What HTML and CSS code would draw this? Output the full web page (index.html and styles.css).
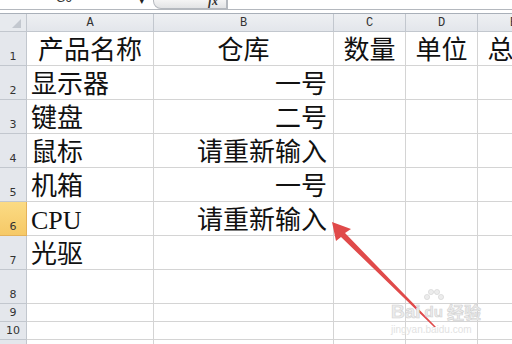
FILE: index.html
```html
<!DOCTYPE html>
<html lang="zh-CN">
<head>
<meta charset="utf-8">
<title>Sheet</title>
<link rel="stylesheet" href="styles.css">
</head>
<body>
<div class="fbar">
  <div class="namebox"><span class="ref">G6</span><span class="dd">&#9662;</span></div>
  <div class="fxbox"><span class="fx">fx</span></div>
  <div class="finput"></div>
</div>
<div class="sheet">
  <div class="corner"><span class="tri"></span></div>
  <div class="ch">A</div><div class="ch">B</div><div class="ch">C</div><div class="ch">D</div><div class="ch">E</div>

  <div class="rh">1</div><div class="c center">产品名称</div><div class="c center">仓库</div><div class="c center">数量</div><div class="c center">单位</div><div class="c center">总价</div>
  <div class="rh">2</div><div class="c">显示器</div><div class="c right">一号</div><div class="c"></div><div class="c"></div><div class="c"></div>
  <div class="rh">3</div><div class="c">键盘</div><div class="c right">二号</div><div class="c"></div><div class="c"></div><div class="c"></div>
  <div class="rh">4</div><div class="c">鼠标</div><div class="c right">请重新输入</div><div class="c"></div><div class="c"></div><div class="c"></div>
  <div class="rh">5</div><div class="c">机箱</div><div class="c right">一号</div><div class="c"></div><div class="c"></div><div class="c"></div>
  <div class="rh sel">6</div><div class="c">CPU</div><div class="c right">请重新输入</div><div class="c"></div><div class="c"></div><div class="c"></div>
  <div class="rh">7</div><div class="c">光驱</div><div class="c"></div><div class="c"></div><div class="c"></div><div class="c"></div>
  <div class="rh">8</div><div class="c"></div><div class="c"></div><div class="c"></div><div class="c"></div><div class="c"></div>
  <div class="rh">9</div><div class="c"></div><div class="c"></div><div class="c"></div><div class="c"></div><div class="c"></div>
  <div class="rh">10</div><div class="c"></div><div class="c"></div><div class="c"></div><div class="c"></div><div class="c"></div>
  <div class="rh">11</div><div class="c"></div><div class="c"></div><div class="c"></div><div class="c"></div><div class="c"></div>
</div>

<svg class="arrow" width="512" height="344" viewBox="0 0 512 344">
  <path d="M332 222 L351 229 L345 233 L436 327 L434 327 L341 237 L336 241 Z" fill="#e04a4a"/>
</svg>

<div class="wm">
  <div class="wm-logo"><span class="wm-bai">Bai</span><span class="wm-du"><svg class="paw" width="26" height="14" viewBox="0 0 26 14"><circle cx="6" cy="9" r="2.6"/><circle cx="10" cy="4" r="2.6"/><circle cx="16" cy="4" r="2.6"/><circle cx="20" cy="9" r="2.6"/></svg>du</span><span class="wm-jy">经验</span></div>
  <div class="wm-url">jingyan.baidu.com</div>
</div>
</body>
</html>
```

FILE: styles.css
```css
html, body {
  margin: 0;
  padding: 0;
  background: #ffffff;
  width: 512px;
  height: 344px;
  overflow: hidden;
  position: relative;
}

.fbar {
  display: flex;
  height: 9px;
  border-bottom: 1px solid #b4b8be;
  margin-bottom: 3px;
  overflow: hidden;
}

.namebox {
  width: 153px;
  position: relative;
  font-family: "Liberation Sans", sans-serif;
  font-size: 12px;
  color: #333;
}

.ref {
  position: absolute;
  left: 56px;
  top: -9px;
}

.dd {
  position: absolute;
  left: 139px;
  top: -6px;
  font-size: 11px;
  color: #222;
}

.fxbox {
  width: 74px;
  box-sizing: border-box;
  background: linear-gradient(#f4f4f4, #e2e3e5);
  border: 1px solid #b4b8be;
  border-top: none;
  border-radius: 0 0 0 8px;
  position: relative;
}

.fx {
  position: absolute;
  right: 8px;
  top: -6px;
  font-family: "Liberation Serif", serif;
  font-style: italic;
  font-weight: bold;
  font-size: 12px;
  color: #333;
}

.finput {
  flex: 1;
  border-left: 1px solid #b4b8be;
}

.sheet {
  display: grid;
  width: 600px;
  grid-template-columns: 27px 127px 180px 72px 72px 72px;
  grid-template-rows: 18px repeat(8, 34px) 18px 18px 18px;
  border-top: 1px solid #a9b0b9;
}

.corner {
  background: #e7eaee;
  border-right: 1px solid #c2c7ce;
  border-bottom: 1px solid #c2c7ce;
  position: relative;
}

.tri {
  position: absolute;
  right: 5px;
  bottom: 3px;
  width: 0;
  height: 0;
  border-left: 9px solid transparent;
  border-bottom: 9px solid #c3c8cf;
}

.ch {
  background: linear-gradient(#eef0f3, #e3e6eb);
  border-right: 1px solid #c2c7ce;
  border-bottom: 1px solid #c2c7ce;
  font-family: "Liberation Mono", "DejaVu Sans Mono", monospace;
  font-size: 12px;
  color: #333;
  display: flex;
  align-items: center;
  justify-content: center;
  padding-top: 1px;
  box-sizing: border-box;
}

.rh {
  background: #e4e7ec;
  border-right: 1px solid #c2c7ce;
  border-bottom: 1px solid #c2c7ce;
  font-family: "DejaVu Sans", "Liberation Sans", sans-serif;
  font-size: 11px;
  color: #333;
  display: flex;
  align-items: flex-end;
  justify-content: center;
  padding-bottom: 2px;
  box-sizing: border-box;
}

.rh.sel {
  background: linear-gradient(#fbdb84, #f6c967);
  border-bottom-color: #e4b25a;
  border-right-color: #e4b25a;
}

.c {
  border-right: 1px solid #d4d4d4;
  border-bottom: 1px solid #d4d4d4;
  font-family: "Liberation Serif", "Noto Sans CJK SC", serif;
  font-size: 26px;
  line-height: 26px;
  color: #111;
  display: flex;
  align-items: flex-end;
  padding: 0 6px 1px 4px;
  box-sizing: border-box;
  white-space: nowrap;
  overflow: hidden;
}

.c.center {
  justify-content: center;
  padding-left: 0;
  padding-right: 0;
}

.c.right {
  justify-content: flex-end;
}

.arrow {
  position: absolute;
  left: 0;
  top: 0;
}

.wm {
  position: absolute;
  left: 391px;
  top: 288px;
  color: #ececec;
  font-family: "Liberation Sans", sans-serif;
}

.wm-logo {
  display: flex;
  align-items: flex-end;
  font-size: 19px;
  font-weight: bold;
  line-height: 20px;
  -webkit-text-stroke: 0.6px #d2d2d2;
}

.wm-du {
  position: relative;
  font-size: 15px;
  margin: 0 2px;
  padding: 14px 2px 0;
}

.paw {
  position: absolute;
  left: -2px;
  top: 0;
  fill: #ececec;
  stroke: #d2d2d2;
  stroke-width: 0.6;
}

.wm-jy {
  font-family: "Noto Sans CJK SC", sans-serif;
  font-size: 17px;
}

.wm-url {
  font-size: 10px;
  margin-top: 2px;
  color: #e2e2e2;
}
```
